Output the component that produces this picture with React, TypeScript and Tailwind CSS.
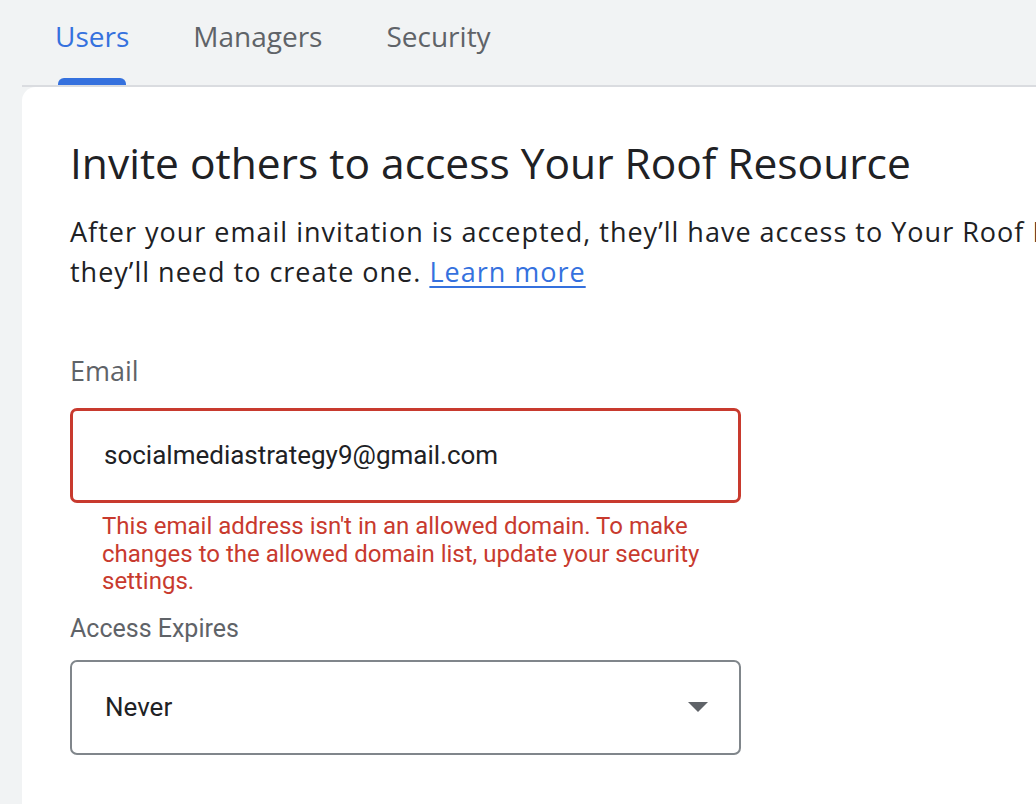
import React from "react";

const tabs = [
  { id: "users", label: "Users", active: true },
  { id: "managers", label: "Managers", active: false },
  { id: "security", label: "Security", active: false },
];

export default function App() {
  return (
    <div className="h-screen w-screen overflow-hidden bg-[#f1f3f4] font-[Roboto,sans-serif]">
      {/* Tabs */}
      <div className="flex h-[85px] pl-[55px] gap-[64px]">
        {tabs.map((t) => (
          <div key={t.id} className="flex flex-col h-full">
            <span
              className={`pt-[17px] text-[28px] font-medium leading-[38px] font-['Open_Sans',Roboto,sans-serif] ${
                t.active ? "text-[#3571de]" : "text-[#5f6368]"
              }`}
            >
              {t.label}
            </span>
            {t.active && <div className="mt-auto mx-[3px] h-[7px] rounded-t-[6px] bg-[#3571de]" />}
          </div>
        ))}
      </div>
      <div className="ml-[22px] h-[2px] bg-[#dadce0]" />

      {/* Card */}
      <div className="ml-[22px] h-full bg-white rounded-tl-[14px] pl-[48px] pt-[50px]">
        <h1 className="text-[42.5px] leading-[52px] text-[#202124] font-['Open_Sans',Roboto,sans-serif] whitespace-nowrap">
          Invite others to access Your Roof Resource
        </h1>
        <p className="mt-[23px] text-[27px] leading-[40px] tracking-[1px] font-medium text-[#202124] font-['Open_Sans',Roboto,sans-serif]">
          <span className="block whitespace-nowrap">
            After your email invitation is accepted, they’ll have access to Your Roof Resource. If they don’t have a Google Account,
          </span>
          <span className="block whitespace-nowrap">
            they’ll need to create one.{" "}
            <a href="#" className="text-[#3571de] underline underline-offset-4">
              Learn more
            </a>
          </span>
        </p>

        <div className="w-[671px] mt-[61px]">
          <label className="block text-[27px] leading-[36px] text-[#5f6368] font-['Open_Sans',Roboto,sans-serif]">Email</label>
          <div className="mt-[19px] h-[95px] border-[3px] border-[#c83a2e] rounded-[7px] flex items-center px-[31px]">
            <span className="text-[26px] text-[#202124]">socialmediastrategy9@gmail.com</span>
          </div>
          <p className="mt-[10px] px-[32px] text-[24px] leading-[27.5px] text-[#c83a2e]">
            This email address isn't in an allowed domain. To make changes to the allowed domain list, update your security settings.
          </p>

          <label className="block mt-[18px] text-[25px] leading-[30px] text-[#5f6368]">Access Expires</label>
          <div className="mt-[16px] h-[95px] border-2 border-[#80868b] rounded-[7px] flex items-center justify-between pl-[33px] pr-[31px]">
            <span className="text-[26px] text-[#202124]">Never</span>
            <svg width="20" height="10" viewBox="0 0 20 10">
              <path d="M0 0 L20 0 L10 10 Z" fill="#5f6368" />
            </svg>
          </div>
        </div>
      </div>
    </div>
  );
}
